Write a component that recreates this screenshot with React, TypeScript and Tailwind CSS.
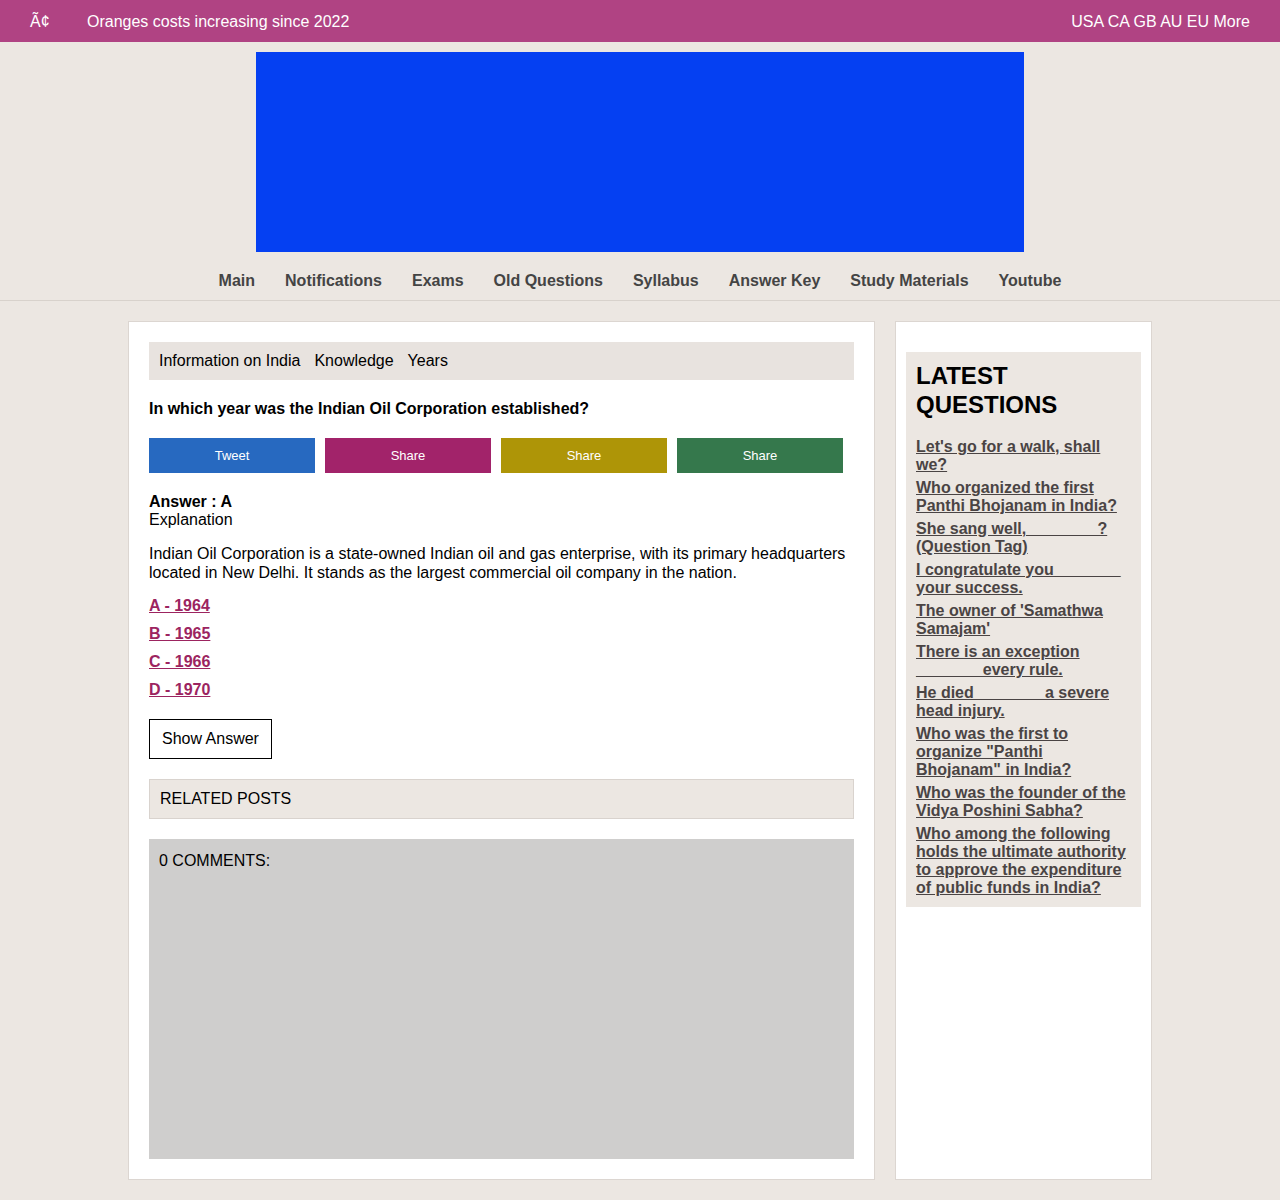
const navItems = ['Main', 'Notifications', 'Exams', 'Old Questions', 'Syllabus', 'Answer Key', 'Study Materials', 'Youtube'];

const shareButtons = [
  { label: 'Tweet', color: 'bg-[#2769c0]' },
  { label: 'Share', color: 'bg-[#a2236a]' },
  { label: 'Share', color: 'bg-[#ae9507]' },
  { label: 'Share', color: 'bg-[#35784c]' },
];

const options = ['A - 1964', 'B - 1965', 'C - 1966', 'D - 1970'];

const latest = [
  "Let's go for a walk, shall we?",
  'Who organized the first Panthi Bhojanam in India?',
  'She sang well, _______ ? (Question Tag)',
  'I congratulate you _______ your success.',
  "The owner of 'Samathwa Samajam'",
  'There is an exception _______ every rule.',
  'He died _______ a severe head injury.',
  'Who was the first to organize "Panthi Bhojanam" in India?',
  'Who was the founder of the Vidya Poshini Sabha?',
  'Who among the following holds the ultimate authority to approve the expenditure of public funds in India?',
];

export default function App() {
  return (
    <div className="min-h-[1200px] bg-[#ece7e2] font-['Liberation_Sans',Arial,sans-serif] text-black">
      {/* top bar */}
      <div className="flex h-[42px] items-center justify-between bg-[#b04383] px-[30px] pt-[1px] text-[16px] text-white">
        <div className="flex items-center">
          <span className="w-[57px]">Ã¢</span>
          <span>Oranges costs increasing since 2022</span>
        </div>
        <span>USA CA GB AU EU More</span>
      </div>

      {/* banner */}
      <div className="flex justify-center pt-[10px]">
        <div className="h-[200px] w-[768px] bg-[#0540f2]"></div>
      </div>

      {/* nav */}
      <nav className="flex h-[49px] items-center justify-center gap-[30px] border-b border-[#d8d2cc] text-[16px] font-bold text-[#444]">
        {navItems.map((item) => (
          <a key={item} href="#" className="pt-[10px]">{item}</a>
        ))}
      </nav>

      <div className="mx-auto mt-[20px] flex w-[1024px] items-stretch gap-[20px] pb-[20px]">
        {/* main card */}
        <div className="w-[747px] border border-[#dcd6d1] bg-white p-[20px]">
          <div className="flex h-[38px] items-center gap-[14px] bg-[#e8e3df] px-[10px] text-[16px]">
            <span>Information on India</span>
            <span>Knowledge</span>
            <span>Years</span>
          </div>

          <h1 className="mt-[20px] text-[16px] font-bold leading-[18px]">In which year was the Indian Oil Corporation established?</h1>

          <div className="mt-[20px] flex gap-[10px]">
            {shareButtons.map((b, i) => (
              <button key={i} className={`h-[35px] w-[166px] text-[13px] text-white ${b.color}`}>{b.label}</button>
            ))}
          </div>

          <div className="mt-[20px] text-[16px] leading-[18px]">
            <div className="font-bold">Answer : A</div>
            <div>Explanation</div>
          </div>

          <p className="mt-[15px] text-[16px] leading-[19px]">
            Indian Oil Corporation is a state-owned Indian oil and gas enterprise, with its primary headquarters located in New Delhi. It stands as the largest commercial oil company in the nation.
          </p>

          <div className="mt-[15px] flex flex-col gap-[10px]">
            {options.map((o) => (
              <a key={o} href="#" className="text-[16px] font-bold leading-[18px] text-[#9c2460] underline">{o}</a>
            ))}
          </div>

          <button className="mt-[20px] h-[40px] border border-black bg-white px-[12px] text-[16px]">Show Answer</button>

          <div className="mt-[20px] flex h-[40px] items-center border border-[#d9d3ce] bg-[#ece7e2] px-[10px] text-[16px]">RELATED POSTS</div>

          <div className="mt-[20px] h-[320px] bg-[#cfcecd] px-[10px] pt-[10px] text-[16px]">0 COMMENTS:</div>
        </div>

        {/* sidebar */}
        <div className="w-[257px] border border-[#dcd6d1] bg-white px-[10px] pt-[30px]">
          <div className="bg-[#ece7e2] px-[10px] pb-[10px] pt-[9px]">
            <h2 className="text-[24px] font-bold leading-[29px]">LATEST QUESTIONS</h2>
            <div className="mt-[19px] flex flex-col gap-[5px]">
              {latest.map((q) => (
                <a key={q} href="#" className="text-[16px] font-bold leading-[18px] text-[#4a4444] underline">{q}</a>
              ))}
            </div>
          </div>
        </div>
      </div>
    </div>
  );
}
